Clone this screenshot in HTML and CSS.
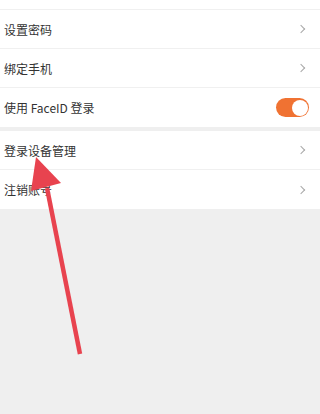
FILE: index.html
```html
<!DOCTYPE html>
<html lang="zh">
<head>
<meta charset="utf-8">
<link rel="stylesheet" href="styles.css">
</head>
<body>
<div class="page">
  <div class="group">
    <div class="stub"></div>
    <div class="row"><span class="label">设置密码</span><span class="chev"></span></div>
    <div class="row"><span class="label">绑定手机</span><span class="chev"></span></div>
    <div class="row"><span class="label">使用 FaceID 登录</span><span class="toggle"><span class="knob"></span></span></div>
  </div>
  <div class="group">
    <div class="row"><span class="label">登录设备管理</span><span class="chev"></span></div>
    <div class="row"><span class="label">注销账号</span><span class="chev"></span></div>
  </div>
  <svg class="arrow" width="320" height="414" viewBox="0 0 320 414">
    <line x1="80" y1="354" x2="47" y2="188" stroke="#e8434f" stroke-width="4.5"/>
    <polygon points="36,157 31,191 61,183" fill="#e8434f"/>
  </svg>
</div>
</body>
</html>
```
FILE: styles.css
```css
* { box-sizing: border-box; }
html, body { margin: 0; padding: 0; }
body {
  background: #efefef;
  font-family: "Noto Sans CJK SC", "Noto Sans", sans-serif;
  width: 320px;
  height: 414px;
  overflow: hidden;
}
.page { position: relative; width: 320px; height: 414px; }
.group {
  background: #fff;
  display: flex;
  flex-direction: column;
  margin-bottom: 4px;
}
.stub { height: 10px; border-bottom: 1px solid #f0f0f0; }
.row {
  height: 39px;
  display: flex;
  align-items: center;
  justify-content: space-between;
  padding: 0 11px 0 4px;
  border-bottom: 1px solid #f0f0f0;
}
.row:last-child { border-bottom: none; }
.label { font-size: 12px; color: #333; }
.chev {
  width: 6px;
  height: 6px;
  border-right: 1px solid #a8a8a8;
  border-top: 1px solid #a8a8a8;
  transform: rotate(45deg);
  margin-right: 5px;
}
.toggle {
  width: 33px;
  height: 19px;
  border-radius: 10px;
  background: #f07232;
  position: relative;
}
.knob {
  position: absolute;
  right: 1.5px;
  top: 1.5px;
  width: 16px;
  height: 16px;
  border-radius: 50%;
  background: #fff;
}
.arrow { position: absolute; left: 0; top: 0; pointer-events: none; }
```
